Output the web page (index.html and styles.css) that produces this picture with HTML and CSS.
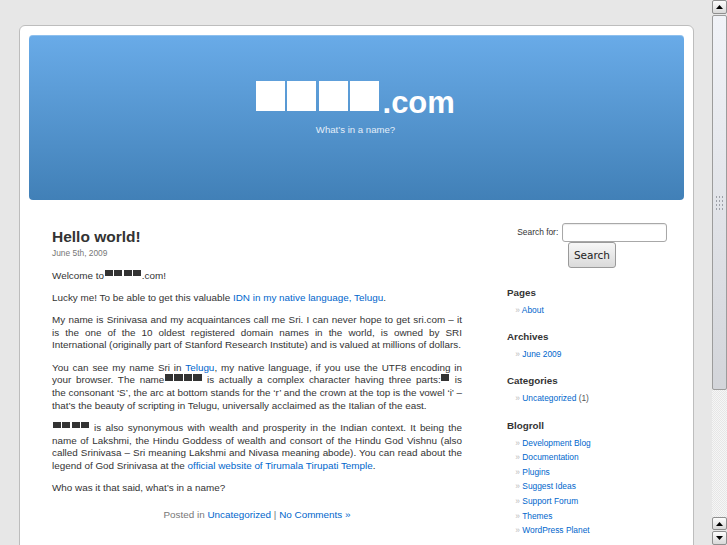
FILE: index.html
```html
<!DOCTYPE html>
<html lang="en">
<head>
<meta charset="utf-8">
<title>శ్రీ.com</title>
<link rel="stylesheet" href="styles.css">
</head>
<body>
<div class="viewport">
  <div class="page">
    <header class="header">
      <h1 class="site-title"><span class="tofu-set" title="శ్రీ"><span class="tofu"></span><span class="tofu"></span><span class="tofu"></span><span class="tofu"></span></span>.com</h1>
      <div class="description">What’s in a name?</div>
    </header>
    <div class="content">
      <main class="main">
        <article class="post">
          <h2 class="post-title">Hello world!</h2>
          <small class="post-date">June 5th, 2009</small>
          <div class="entry">
            <p>Welcome to<span class="tofu-set" title="శ్రీ"><span class="tofu"></span><span class="tofu"></span><span class="tofu"></span><span class="tofu"></span></span>.com!</p>
            <p>Lucky me! To be able to get this valuable <a href="#">IDN in my native language, Telugu</a>.</p>
            <p>My name is Srinivasa and my acquaintances call me Sri. I can never hope to get sri.com – it is the one of the 10 oldest registered domain names in the world, is owned by SRI International (originally part of Stanford Research Institute) and is valued at millions of dollars.</p>
            <p>You can see my name Sri in <a href="#">Telugu</a>, my native language, if you use the UTF8 encoding in your browser. The name<span class="tofu-set" title="శ్రీ"><span class="tofu"></span><span class="tofu"></span><span class="tofu"></span><span class="tofu"></span></span> is actually a complex character having three parts:<span class="tofu-set" title="శ"><span class="tofu"></span></span> is the&nbsp;consonant ‘S’, the arc at bottom stands for the ‘r’ and the crown at the top is the vowel ‘i’ – that’s the beauty of scripting in Telugu, universally acclaimed as the Italian of the east.</p>
            <p><span class="tofu-set" title="శ్రీ"><span class="tofu"></span><span class="tofu"></span><span class="tofu"></span><span class="tofu"></span></span> is also synonymous with wealth and prosperity in the Indian context. It being the name of Lakshmi, the Hindu Goddess of wealth and consort of the Hindu God Vishnu (also called Srinivasa – Sri meaning Lakshmi and Nivasa meaning abode). You can read about the legend of God Srinivasa at the <a href="#">official website of Tirumala Tirupati Temple</a>.</p>
            <p>Who was it that said, what’s in a name?</p>
          </div>
          <p class="postmetadata">Posted in <a href="#">Uncategorized</a> | <a href="#">No Comments »</a></p>
        </article>
      </main>
      <aside class="sidebar">
        <form class="searchform">
          <div class="search-row">
            <label class="search-label" for="s">Search for:</label>
            <input class="search-input" type="text" id="s">
          </div>
          <button class="search-btn" type="button">Search</button>
        </form>
        <section class="widget">
          <h2>Pages</h2>
          <ul><li><a href="#">About</a></li></ul>
        </section>
        <section class="widget">
          <h2>Archives</h2>
          <ul><li><a href="#">June 2009</a></li></ul>
        </section>
        <section class="widget">
          <h2>Categories</h2>
          <ul><li><a href="#">Uncategorized</a> (1)</li></ul>
        </section>
        <section class="widget">
          <h2>Blogroll</h2>
          <ul>
            <li><a href="#">Development Blog</a></li>
            <li><a href="#">Documentation</a></li>
            <li><a href="#">Plugins</a></li>
            <li><a href="#">Suggest Ideas</a></li>
            <li><a href="#">Support Forum</a></li>
            <li><a href="#">Themes</a></li>
            <li><a href="#">WordPress Planet</a></li>
          </ul>
        </section>
      </aside>
    </div>
  </div>
</div>
<div class="scrollbar">
  <div class="sb-btn sb-top"><svg width="7" height="4" viewBox="0 0 7 4"><polygon points="0,4 3.5,0 7,4" fill="#000"/></svg></div>
  <div class="sb-thumb"><div class="sb-grip"></div></div>
  <div class="sb-track"></div>
  <div class="sb-btn sb-up"><svg width="7" height="4" viewBox="0 0 7 4"><polygon points="0,4 3.5,0 7,4" fill="#000"/></svg></div>
  <div class="sb-btn sb-down"><svg width="7" height="4" viewBox="0 0 7 4"><polygon points="0,0 7,0 3.5,4" fill="#000"/></svg></div>
</div>
</body>
</html>
```
FILE: styles.css
```css
html, body {
  margin: 0;
  height: 100%;
}
body {
  background: #e7e7e7;
  display: flex;
  overflow: hidden;
  font-family: "Liberation Sans", Arial, sans-serif;
  color: #333;
}
a {
  color: #06c;
  text-decoration: none;
}
.viewport {
  flex: 1;
  min-width: 0;
  padding: 25px 0 0 19px;
  overflow: hidden;
}
.page {
  width: 675px;
  box-sizing: border-box;
  min-height: 600px;
  background: #fff;
  border: 1px solid #bdbdbd;
  border-radius: 6px;
  padding: 9px;
}
.header {
  height: 165px;
  box-sizing: border-box;
  padding: 46px 2px 0 0;
  border-radius: 4px;
  background: linear-gradient(#69abe8, #4180b7);
  box-shadow: inset 0 1px 0 rgba(255,255,255,0.25);
  text-align: center;
  color: #fff;
}
.site-title {
  margin: 0;
  font-size: 31px;
  line-height: 36px;
  font-weight: bold;
}
.tofu-set {
  white-space: nowrap;
}
.header .tofu {
  display: inline-block;
  width: 29px;
  height: 30px;
  background: #fff;
  margin-right: 2.3px;
  vertical-align: 2px;
}
.header .tofu:last-child {
  margin-right: 3.5px;
}
.description {
  margin-top: 3px;
  font-size: 9.6px;
  line-height: 12px;
  color: #e4eef9;
}
.content {
  display: flex;
  padding: 22px 0 0 23px;
}
.main {
  width: 410px;
  flex: none;
  padding-top: 6px;
}
.post-title {
  margin: 0;
  font-size: 15.5px;
  line-height: 18px;
  font-weight: bold;
  color: #333;
}
.post-date {
  display: block;
  margin-top: 1px;
  font-size: 8.4px;
  line-height: 12px;
  color: #777;
}
.entry {
  padding-top: 1px;
}
.entry p {
  margin: 9.6px 0;
  font-size: 9.9px;
  line-height: 12.6px;
  text-align: justify;
}
.entry .tofu {
  display: inline-block;
  width: 8.2px;
  height: 6.6px;
  background: #333;
  margin: 0 0.65px;
  vertical-align: 2.7px;
}
.postmetadata {
  margin: 14px 0 0;
  font-size: 9.9px;
  line-height: 12.6px;
  text-align: center;
  color: #777;
}
.sidebar {
  width: 170px;
  flex: none;
  margin-left: 45px;
  padding-top: 0.7px;
}
.searchform {
  display: flex;
  flex-direction: column;
  align-items: center;
  margin: 0;
}
.search-row {
  display: flex;
  align-items: center;
  gap: 3.5px;
}
.search-label {
  font-size: 8.4px;
  line-height: 10px;
  color: #333;
}
.search-input {
  width: 105px;
  height: 19px;
  box-sizing: border-box;
  border: 1px solid #a8a8a8;
  border-radius: 3px;
  background: #fff;
  margin: 0;
  padding: 0 2px;
  box-shadow: inset 0 1px 1px rgba(0,0,0,0.08);
}
.search-btn {
  width: 48px;
  height: 26px;
  box-sizing: border-box;
  margin: 0;
  padding: 0;
  border: 1px solid #9a9a9a;
  border-radius: 3px;
  background: linear-gradient(#f7f7f7, #dadada);
  font-family: "DejaVu Sans", sans-serif;
  font-size: 10.5px;
  color: #222;
}
.widget h2 {
  margin: 0 0 4px;
  font-size: 9.8px;
  line-height: 12px;
  font-weight: bold;
  color: #333;
}
.widget ul {
  margin: 0;
  padding: 0 0 0 8.3px;
  list-style: none;
}
.widget li {
  font-size: 8.4px;
  line-height: 14.6px;
  color: #555;
}
.widget li::before {
  content: "» ";
  color: #bbb;
}
.searchform + .widget {
  margin-top: 19px;
}
.widget + .widget {
  margin-top: 13.7px;
}
.scrollbar {
  width: 15px;
  flex: none;
  display: flex;
  flex-direction: column;
  background: #e7e7e7;
}
.sb-btn {
  box-sizing: border-box;
  border: 1px solid #8f8f8f;
  border-radius: 2px;
  background: linear-gradient(#fdfdfd, #d9d9d9);
  display: flex;
  align-items: center;
  justify-content: center;
  flex: none;
}
.sb-top {
  height: 14px;
}
.sb-up {
  height: 13px;
}
.sb-down {
  height: 14px;
  margin-top: 1px;
}
.sb-thumb {
  flex: none;
  height: 375px;
  margin-top: 1px;
  box-sizing: border-box;
  border: 1px solid #9c9c9c;
  border-radius: 2px;
  background: linear-gradient(#f1f3f8, #d3d5da);
  display: flex;
  align-items: center;
  justify-content: center;
}
.sb-grip {
  width: 9px;
  height: 16px;
  background-image: radial-gradient(circle, #9ea1a8 0.7px, transparent 1.1px);
  background-size: 3px 4px;
}
.sb-track {
  flex: 1;
  background: repeating-conic-gradient(#f6f6f6 0 25%, #e6e6e6 0 50%) 0 0 / 2px 2px;
}
```
